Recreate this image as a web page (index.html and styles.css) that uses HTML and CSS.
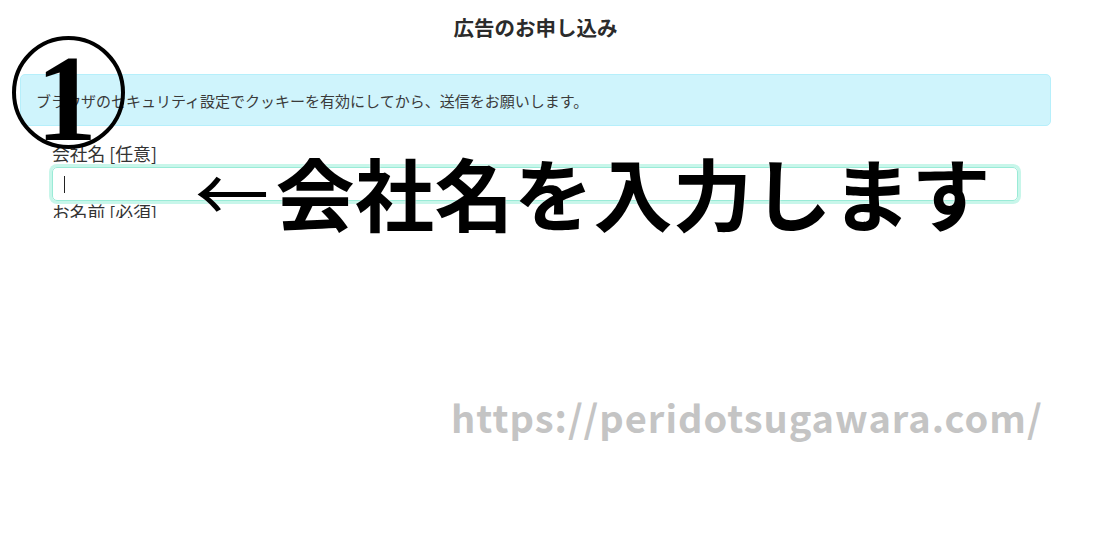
FILE: index.html
```html
<!DOCTYPE html>
<html lang="ja">
<head>
<meta charset="utf-8">
<link rel="stylesheet" href="styles.css">
</head>
<body>
<div class="page">
  <h1 class="title">広告のお申し込み</h1>
  <div class="alert">ブラウザのセキュリティ設定でクッキーを有効にしてから、送信をお願いします。</div>
  <div class="form">
    <label class="label">会社名 [任意]</label>
    <div class="input"><span class="caret"></span></div>
    <label class="label">お名前 [必須]</label>
  </div>
</div>
<div class="badge"><span class="badge-num">1</span></div>
<div class="note"><span class="arrow">←</span>会社名を入力します</div>
<div class="watermark">https://peridotsugawara.com/</div>
</body>
</html>
```
FILE: styles.css
```css
html, body {
  margin: 0;
  padding: 0;
  background: #fff;
}
body {
  position: relative;
  width: 1101px;
  height: 536px;
  overflow: hidden;
  font-family: "Noto Sans CJK JP", "Noto Sans", sans-serif;
  color: #333;
}
.page {
  margin-left: 20px;
  width: 1031px;
  height: 218px;
  overflow: hidden;
}
.title {
  margin: 0;
  padding-top: 13px;
  height: 74px;
  box-sizing: border-box;
  text-align: center;
  font-size: 20.5px;
  font-weight: 700;
  line-height: 28px;
  color: #2b2b2b;
}
.alert {
  height: 52px;
  box-sizing: border-box;
  background: #cff4fc;
  border: 1px solid #b6effb;
  border-radius: 5px;
  padding: 0 15px;
  display: flex;
  align-items: center;
  font-size: 15px;
  color: #3a3a3a;
}
.form {
  padding: 17px 31px 0 31px;
  display: flex;
  flex-direction: column;
}
.label {
  font-size: 17.8px;
  line-height: 20px;
  padding-left: 1px;
  color: #333;
}
.input {
  margin-top: 4px;
  height: 34px;
  box-sizing: border-box;
  border: 1px solid #9aebd7;
  border-radius: 5px;
  box-shadow: 0 0 0 3px #c8f6ea;
  margin-left: 1px;
  margin-right: 2px;
  margin-bottom: 1px;
  display: flex;
  align-items: center;
  padding-left: 11px;
}
.caret {
  width: 1px;
  height: 17px;
  background: #222;
}
.badge {
  position: absolute;
  left: 12px;
  top: 36px;
  width: 113px;
  height: 113px;
  box-sizing: border-box;
  border: 4px solid #000;
  border-radius: 50%;
  display: flex;
  justify-content: center;
  align-items: center;
}
.badge-num {
  font-family: "Liberation Serif", serif;
  font-weight: 700;
  font-size: 122px;
  line-height: 1;
  color: #000;
  margin-top: 12px;
  margin-left: -4px;
}
.note {
  position: absolute;
  left: 195px;
  top: 140px;
  font-family: "Noto Sans CJK JP", sans-serif;
  font-weight: 700;
  font-size: 79px;
  letter-spacing: 0.5px;
  line-height: 100px;
  color: #000;
  white-space: nowrap;
  text-shadow: 0 0 2px #fff;
}
.arrow {
  display: inline-block;
  font-weight: 400;
  font-size: 74px;
  margin-right: 6px;
  vertical-align: 4px;
}
.watermark {
  position: absolute;
  left: 451px;
  top: 390px;
  font-family: "Noto Sans CJK JP", sans-serif;
  font-weight: 700;
  font-size: 38px;
  letter-spacing: 1px;
  line-height: 54px;
  color: #c4c4c4;
  white-space: nowrap;
}
```
